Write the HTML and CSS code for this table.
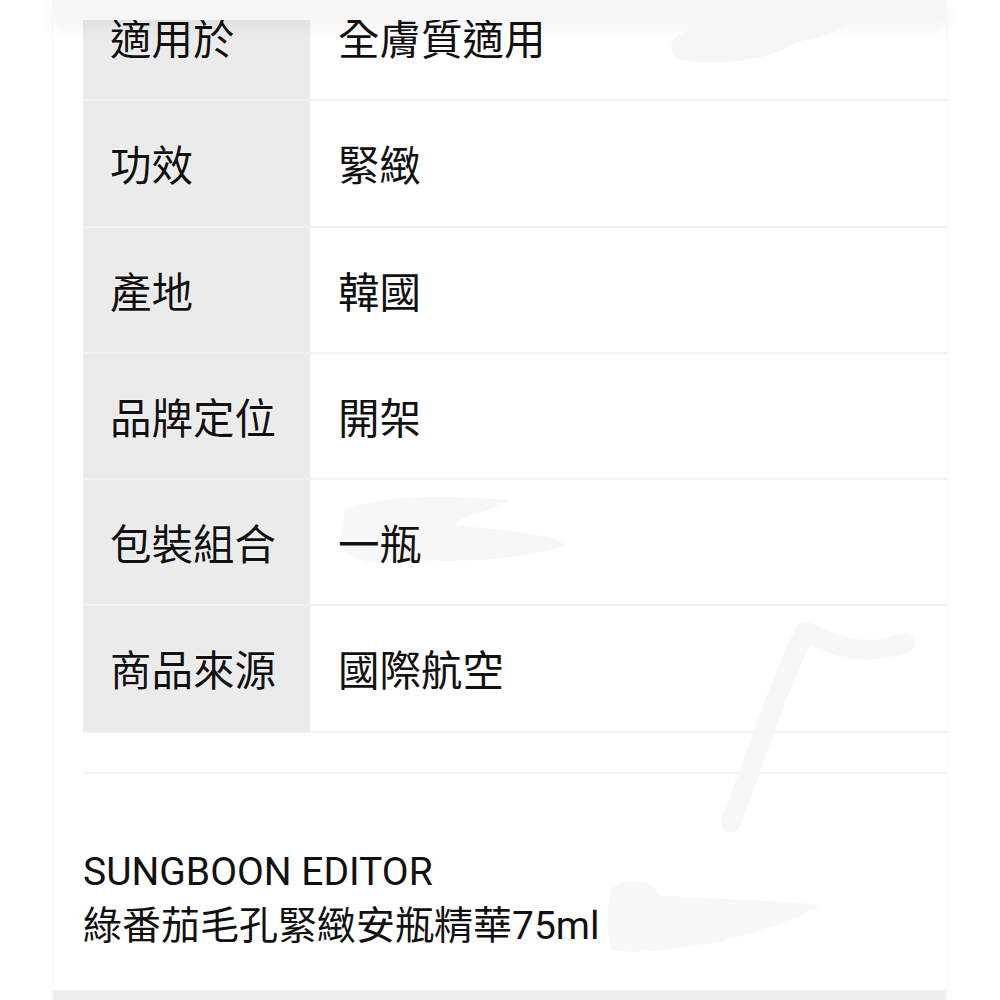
FILE: index.html
```html
<!DOCTYPE html>
<html lang="zh-Hant">
<head>
<meta charset="utf-8">
<title>商品規格</title>
<link rel="stylesheet" href="styles.css">
</head>
<body>
<div class="page">
  <svg class="smudges-back" width="1000" height="1000" viewBox="0 0 1000 1000">
    <path d="M345 510 C380 495 440 495 510 500 C490 512 460 515 455 525 C500 530 560 535 565 545 C540 555 470 565 420 560 C380 568 345 560 340 545 Z" fill="#f7f7f7"/>
    <path d="M612 888 C630 875 650 880 660 895 C720 900 780 900 820 905 C800 920 760 930 720 942 C680 948 640 955 612 950 C605 930 606 905 612 888 Z" fill="#f8f8f8"/>
  </svg>
  <div class="sheet">
    <div class="spec">
      <div class="row"><div class="label">適用於</div><div class="value">全膚質適用</div></div>
      <div class="row"><div class="label">功效</div><div class="value">緊緻</div></div>
      <div class="row"><div class="label">產地</div><div class="value">韓國</div></div>
      <div class="row"><div class="label">品牌定位</div><div class="value">開架</div></div>
      <div class="row"><div class="label">包裝組合</div><div class="value">一瓶</div></div>
      <div class="row"><div class="label">商品來源</div><div class="value">國際航空</div></div>
    </div>
    <div class="divider"></div>
    <div class="title">SUNGBOON EDITOR<br>綠番茄毛孔緊緻安瓶精華75ml</div>
    <div class="footer-band"></div>
  </div>
  <div class="topbar"></div>
  <svg class="smudges-front" width="1000" height="1000" viewBox="0 0 1000 1000">
    <path d="M680 15 C720 8 800 12 845 25 C840 35 800 40 790 45 C770 60 720 66 680 60 C665 50 670 35 690 30 Z" fill="#f6f6f6"/>
    <path d="M731 822 C755 760 780 680 805 632 C830 640 850 660 905 643" fill="none" stroke="#f7f7f7" stroke-width="20" stroke-linecap="round" stroke-linejoin="round"/>
  </svg>
</div>
</body>
</html>
```

FILE: styles.css
```css
html, body {
  margin: 0;
  padding: 0;
  background: #ffffff;
}

body {
  font-family: "Roboto", "Noto Sans CJK TC", "Noto Sans", sans-serif;
  color: #111111;
}

.page {
  position: relative;
  width: 1000px;
  height: 1000px;
  overflow: hidden;
  background: #ffffff;
}

.sheet {
  position: relative;
  margin-left: 52px;
  width: 895px;
  height: 1000px;
  border-left: 1px solid #f6f6f6;
  border-right: 1px solid #f8f8f8;
  box-sizing: border-box;
  display: flex;
  flex-direction: column;
}

.spec {
  margin-top: -25px;
  margin-left: 30px;
}

.row {
  display: grid;
  grid-template-columns: 227px 1fr;
  height: 126.25px;
  box-sizing: border-box;
  border-bottom: 2px solid #f1f1f1;
}

.label {
  background: #ebebeb;
  display: flex;
  align-items: center;
  padding-left: 27px;
  font-size: 41.5px;
  color: #111111;
  text-shadow: 0 0 2px #ffffff, 0 0 1px #ffffff;
}

.value {
  display: flex;
  align-items: center;
  padding-left: 28px;
  font-size: 41.5px;
  color: #111111;
}

.divider {
  margin-top: 39px;
  margin-left: 30px;
  height: 2px;
  background: #f3f3f3;
}

.title {
  margin-top: 71px;
  margin-left: 30px;
  font-size: 39px;
  line-height: 54px;
  color: #111111;
}

.footer-band {
  margin-top: auto;
  height: 10px;
  background: #f0f0f0;
}

.topbar {
  position: absolute;
  top: 0;
  left: 52px;
  width: 895px;
  height: 20px;
  background: #f7f7f7;
  box-shadow: 0 6px 18px rgba(0, 0, 0, 0.06);
}

.smudges-back,
.smudges-front {
  position: absolute;
  top: 0;
  left: 0;
  pointer-events: none;
}
```
